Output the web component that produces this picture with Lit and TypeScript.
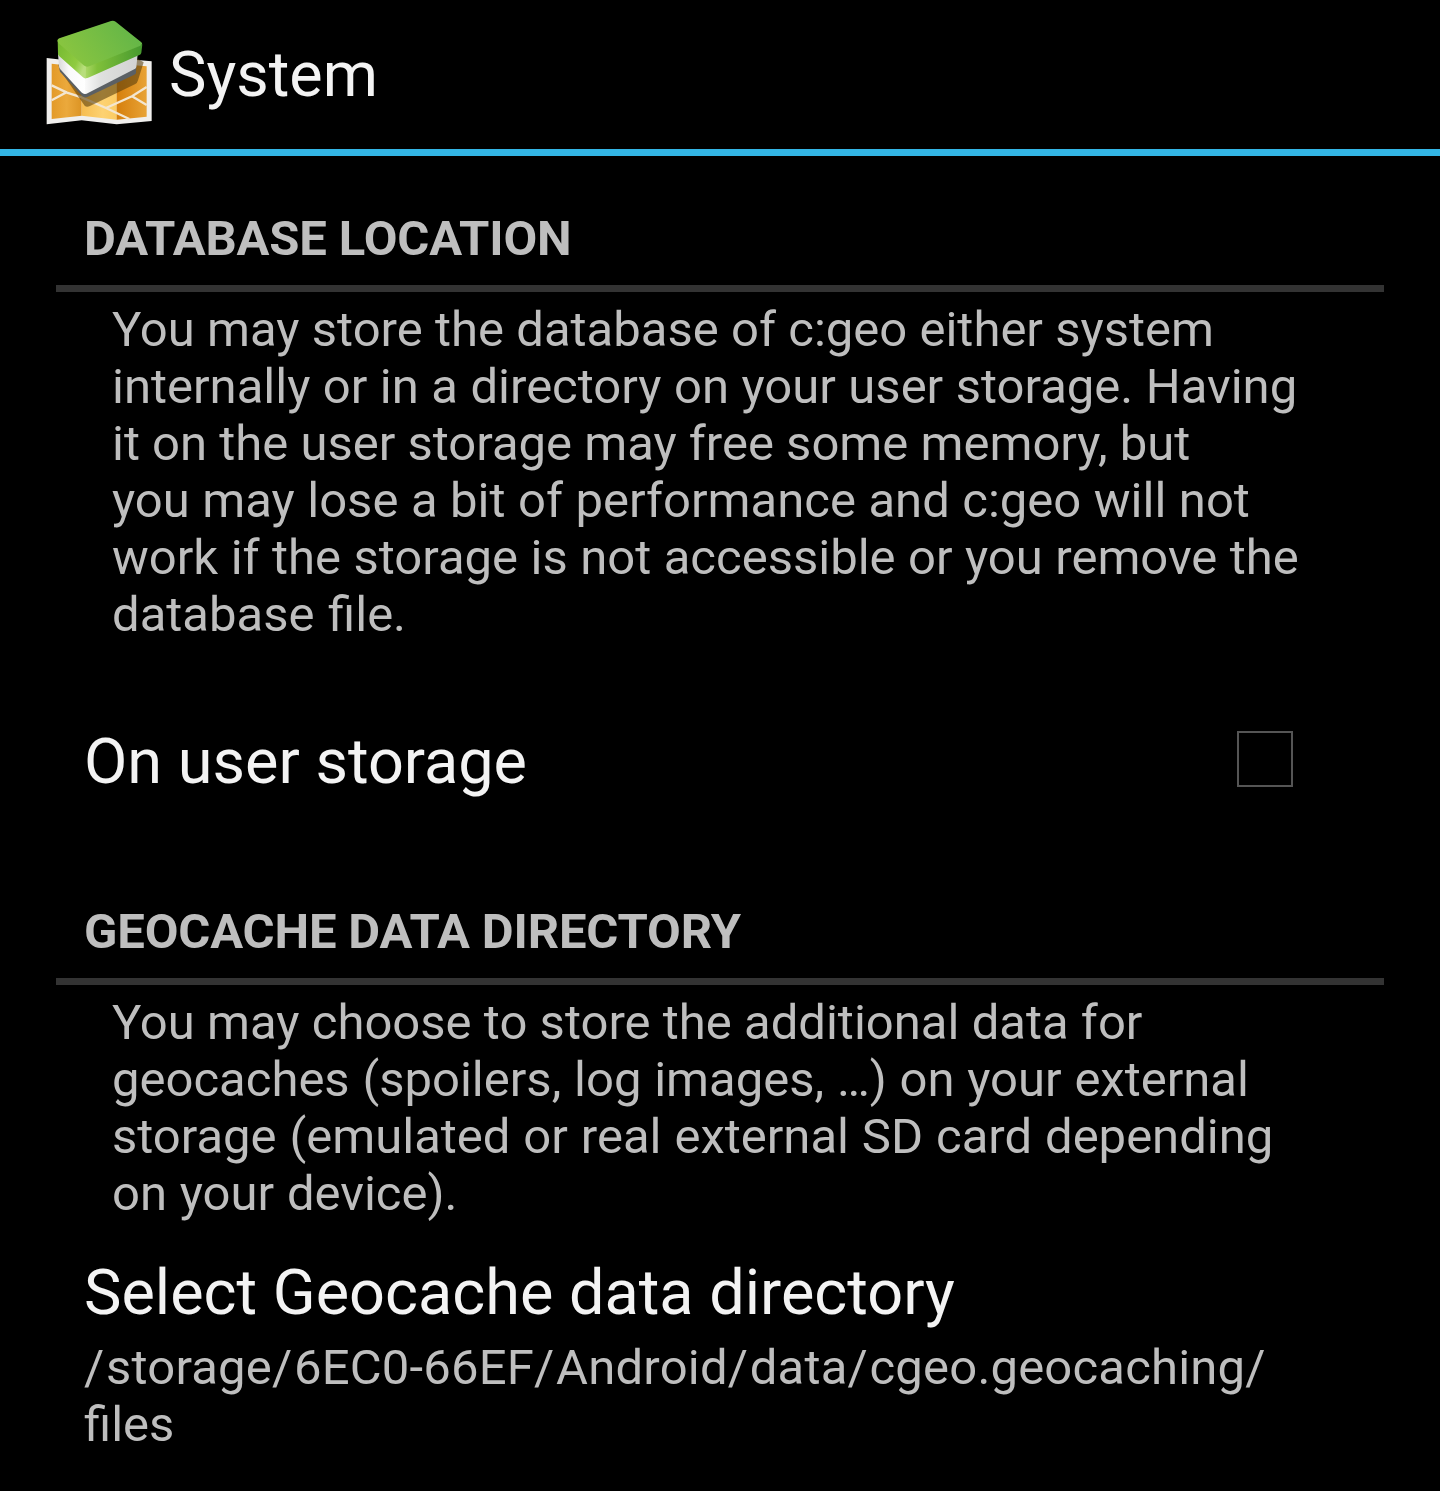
import { LitElement, html, css } from "lit";
import { customElement } from "lit/decorators.js";

type Line = { text: string; gap: number };

const DATABASE_TEXT: Line[] = [
  { text: "You may store the database of c:geo either system", gap: 0.12 },
  { text: "internally or in a directory on your user storage. Having", gap: 0.33 },
  { text: "it on the user storage may free some memory, but", gap: 0 },
  { text: "you may lose a bit of performance and c:geo will not", gap: 0.36 },
  { text: "work if the storage is not accessible or you remove the", gap: 0.3 },
  { text: "database file.", gap: 1.5 },
];

const DIRECTORY_TEXT: Line[] = [
  { text: "You may choose to store the additional data for", gap: 0.1 },
  { text: "geocaches (spoilers, log images, …) on your external", gap: 0.6 },
  { text: "storage (emulated or real external SD card depending", gap: 0.75 },
  { text: "on your device).", gap: 0.6 },
];

const DIRECTORY = "/storage/6EC0-66EF/Android/data/cgeo.geocaching/";

@customElement("app-root")
export class AppRoot extends LitElement {
  static styles = css`
    :host { display: block; height: 1491px; overflow: hidden; background: #000; color: #f3f3f3; font-family: Roboto, sans-serif; box-sizing: border-box; }
    .bar { height: 149px; border-bottom: 7px solid #33b5e5; display: flex; align-items: center; }
    .logo { width: 112px; height: 112px; margin-left: 43px; margin-top: -5px; }
    .title { font-size: 63px; font-weight: 400; margin: 0 0 0 14px; line-height: 74px; }
    .list { padding: 0 56px; }
    .cat { color: #bebebe; font-size: 49px; font-weight: 700; line-height: 58px; letter-spacing: -0.15px; margin: 0; padding: 54px 28px 17px; border-bottom: 7px solid #333; text-transform: uppercase; }
    .text { color: #bebebe; font-size: 49px; line-height: 57px; padding: 9px 56px 0; white-space: nowrap; }
    .row { display: flex; justify-content: space-between; align-items: flex-start; padding: 82px 91px 0 28px; height: 206px; box-sizing: border-box; }
    .name { font-size: 63px; line-height: 74px; white-space: nowrap; }
    .box { width: 56px; height: 56px; margin-top: 6px; box-sizing: border-box; border: 2px solid #555; }
    .select { padding: 34px 28px 0; }
    .path { color: #bebebe; font-size: 49px; line-height: 57px; margin-top: 9px; white-space: nowrap; }
    .dir { letter-spacing: 0.19px; }
    .slash { letter-spacing: 1.8px; }
  `;

  private lines(lines: Line[]) {
    return html`<div class="text">${lines.map((l) => html`<div style="word-spacing:${l.gap}px">${l.text}</div>`)}</div>`;
  }

  private logo() {
    return html`<svg class="logo" viewBox="39 33 336 336">
      <defs>
        <linearGradient id="m1" x1="0" x2="1"><stop offset="0" stop-color="#e39a28"/><stop offset="0.5" stop-color="#eba93c"/><stop offset="1" stop-color="#dc9424"/></linearGradient>
        <linearGradient id="m2" x1="0" x2="1"><stop offset="0" stop-color="#f6bd50"/><stop offset="0.6" stop-color="#fdd272"/><stop offset="1" stop-color="#fbcb62"/></linearGradient>
        <linearGradient id="m3" x1="0" x2="1"><stop offset="0" stop-color="#d67f0c"/><stop offset="1" stop-color="#e8a336"/></linearGradient>
        <linearGradient id="top" x1="0" y1="0.7" x2="1" y2="0.3"><stop offset="0" stop-color="#8cc63f"/><stop offset="1" stop-color="#62b548"/></linearGradient>
        <linearGradient id="left" x1="0" y1="0" x2="1" y2="0.6"><stop offset="0" stop-color="#74b82f"/><stop offset="0.75" stop-color="#8fcb41"/><stop offset="1" stop-color="#b8de7c"/></linearGradient>
        <linearGradient id="right" x1="0" x2="1"><stop offset="0" stop-color="#aad765"/><stop offset="0.2" stop-color="#80c03a"/><stop offset="1" stop-color="#46992f"/></linearGradient>
        <linearGradient id="wl" x1="0" x2="1"><stop offset="0" stop-color="#d8d8d8"/><stop offset="0.4" stop-color="#fafafa"/><stop offset="1" stop-color="#fff"/></linearGradient>
        <linearGradient id="wr" x1="0" x2="1"><stop offset="0" stop-color="#fafafa"/><stop offset="0.3" stop-color="#dfe0df"/><stop offset="1" stop-color="#d2d2d2"/></linearGradient>
      </defs>
      <path fill="#f0efed" d="M50 159L155 171L260 160L365 169V348L260 358L155 346L50 358Z"/>
      <path fill="url(#m1)" d="M65 176L155 186V332L65 342Z"/>
      <path fill="url(#m2)" d="M155 186L260 176V344L155 332Z"/>
      <path fill="url(#m3)" d="M260 176L350 184V335L260 344Z"/>
      <path fill="none" stroke="#f3e6d0" stroke-width="7" d="M65 241L111 263L155 277L228 309L298 342M65 286L111 261M228 309L306 274L350 246M306 274L350 300"/>
      <path fill="#573c0c" fill-opacity=".58" d="M92 198L164 302Q170 308 180 303L316 237Q322 234 324 226L341 172L320 160Z"/>
      <path fill="#5b6064" d="M85 178L160 258L319 184L318 204Q317 207 313 209L172 276Q163 280 156 273L90 200Z"/>
      <path fill="url(#wl)" d="M84 146L166 216V267Q160 268 154 262L91 193Q87 189 87 184Z"/>
      <path fill="url(#wr)" d="M165 216L323 148L319 186Q318 190 314 192L174 264Q170 267 165 267Z"/>
      <path fill="url(#left)" d="M83 104L168 184V220Q163 221 158 216L88 154Q84 150 84 146Z"/>
      <path fill="url(#right)" d="M168 184L337 118L334 143Q333 148 328 150L178 217Q172 220 167 220Z"/>
      <path fill="url(#top)" d="M88 100L243 48Q250 45 257 50L334 112Q340 118 331 122L178 184Q168 188 160 180L85 114Q79 104 88 100Z"/>
    </svg>`;
  }

  render() {
    return html`
      <header class="bar">${this.logo()}<h1 class="title">System</h1></header>
      <main class="list">
        <h2 class="cat">Database location</h2>
        ${this.lines(DATABASE_TEXT)}
        <div class="row"><span class="name">On user storage</span><span class="box"></span></div>
        <h2 class="cat">Geocache data directory</h2>
        ${this.lines(DIRECTORY_TEXT)}
        <div class="select">
          <div class="name">Select Geocache data directory</div>
          <div class="path"><span class="dir">${DIRECTORY.split(/(\/)/).map((p) => (p === "/" ? html`<span class="slash">/</span>` : p))}</span><br>files</div>
        </div>
      </main>`;
  }
}
